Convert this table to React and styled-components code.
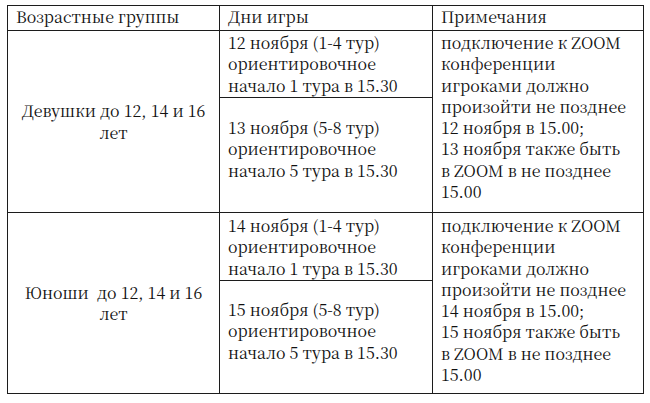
import React from "react";
import styled, { createGlobalStyle } from "styled-components";

const Global = createGlobalStyle`
  html, body {
    margin: 0;
    padding: 0;
    background: #ffffff;
  }
`;

const Table = styled.div`
  display: grid;
  grid-template-columns: 211px 212px 210px;
  grid-template-rows: 24px 66px 114px 67px 112px;
  gap: 1px;
  padding: 1px;
  background: #1c1c1c;
  width: max-content;
  margin: 5px 0 0 7px;
  font-family: "Noto Serif CJK SC", "Noto Serif", serif;
  font-size: 16px;
  line-height: 21.3px;
  color: #111111;
`;

const Cell = styled.div`
  background: #ffffff;
  padding: ${(p) => p.$padTop ?? 0}px 7px 0 8px;
  white-space: nowrap;
  overflow: hidden;
`;

const HeaderCell = styled(Cell)`
  padding-top: 0;
`;

const GroupCell = styled(Cell)`
  grid-row: span 2;
  display: flex;
  align-items: center;
  justify-content: center;
  text-align: center;
  padding: 0 4px;
`;

const NoteCell = styled(Cell)`
  grid-row: span 2;
`;

const rows = [
  {
    group: ["Девушки до 12, 14 и 16", "лет"],
    first: ["12 ноября (1-4 тур)", "ориентировочное", "начало 1 тура в 15.30"],
    second: ["13 ноября (5-8 тур)", "ориентировочное", "начало 5 тура в 15.30"],
    notes: [
      "подключение к ZOOM",
      "конференции",
      "игроками должно",
      "произойти не позднее",
      "12 ноября в 15.00;",
      "13 ноября также быть",
      "в ZOOM в не позднее",
      "15.00",
    ],
  },
  {
    group: ["Юноши\u00a0 до 12, 14 и 16", "лет"],
    first: ["14 ноября (1-4 тур)", "ориентировочное", "начало 1 тура в 15.30"],
    second: ["15 ноября (5-8 тур)", "ориентировочное", "начало 5 тура в 15.30"],
    notes: [
      "подключение к ZOOM",
      "конференции",
      "игроками должно",
      "произойти не позднее",
      "14 ноября в 15.00;",
      "15 ноября также быть",
      "в ZOOM в не позднее",
      "15.00",
    ],
  },
];

const Lines = ({ lines }) =>
  lines.map((l, i) => (
    <React.Fragment key={i}>
      {i > 0 && <br />}
      {l}
    </React.Fragment>
  ));

export default function App() {
  return (
    <>
      <Global />
      <Table>
        <HeaderCell>Возрастные группы</HeaderCell>
        <HeaderCell>Дни игры</HeaderCell>
        <HeaderCell>Примечания</HeaderCell>
        {rows.map((r, i) => (
          <React.Fragment key={i}>
            <GroupCell>
              <div>
                <Lines lines={r.group} />
              </div>
            </GroupCell>
            <Cell $padTop={i === 0 ? 1 : 2}>
              <Lines lines={r.first} />
            </Cell>
            <NoteCell $padTop={i === 0 ? 1 : 2}>
              <Lines lines={r.notes} />
            </NoteCell>
            <Cell $padTop={i === 0 ? 19 : 18}>
              <Lines lines={r.second} />
            </Cell>
          </React.Fragment>
        ))}
      </Table>
    </>
  );
}
